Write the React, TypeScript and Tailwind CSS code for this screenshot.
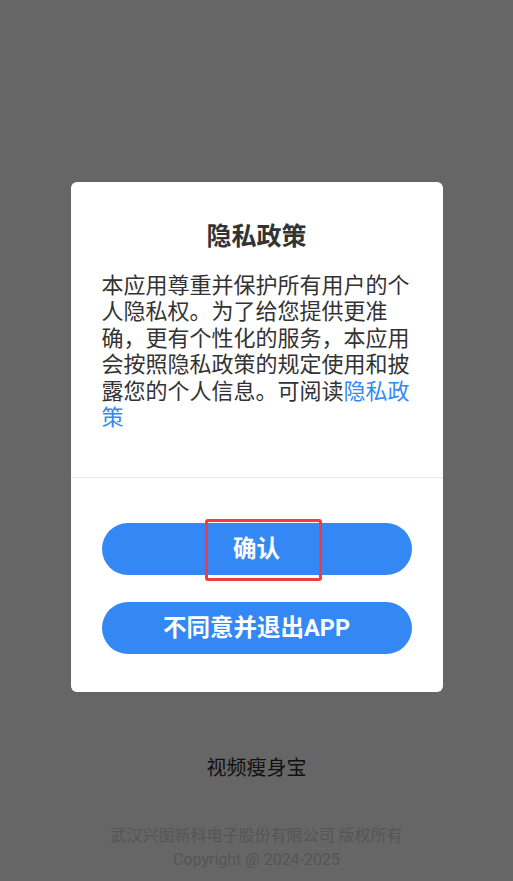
import React from "react";

export default function App() {
  const font = { fontFamily: 'Roboto, "Noto Sans CJK SC", sans-serif' };
  return (
    <div
      className="w-[513px] h-[881px] bg-[#666666] flex flex-col items-center overflow-hidden"
      style={font}
    >
      <div className="mt-[182px] w-[372px] h-[510px] bg-white rounded-[6px] flex flex-col">
        <div className="pt-[39px] text-center text-[25px] leading-[32px] font-bold text-[#333333]">
          隐私政策
        </div>
        <div className="mt-[20px] px-[31px] text-[22px] leading-[26.4px] text-[#333333]">
          本应用尊重并保护所有用户的个人隐私权。为了给您提供更准确，更有个性化的服务，本应用会按照隐私政策的规定使用和披露您的个人信息。可阅读
          <span className="text-[#3388f6]">隐私政策</span>
        </div>
        <div className="mt-[46px] h-px bg-[#e6e9f2]" />
        <div className="px-[31px] pt-[45px] flex flex-col gap-[27px]">
          <div className="relative">
            <button className="w-full h-[52px] rounded-full bg-[#3388f6] text-white text-[23.5px] font-bold">
              确认
            </button>
            <div className="absolute left-[103px] top-[-4px] w-[117px] h-[62px] border-[3px] border-[#f23b3b] rounded-[3px]" />
          </div>
          <button className="w-full h-[52px] rounded-full bg-[#3388f6] text-white text-[23.5px] font-bold">
            不同意并退出APP
          </button>
        </div>
      </div>
      <div className="mt-[63px] text-[20px] leading-[26px] text-[#111111]">视频瘦身宝</div>
      <div className="mt-[43px] text-[16px] leading-[24px] text-[#555555] text-center">
        <div>武汉兴图新科电子股份有限公司 版权所有</div>
        <div>Copyright @ 2024-2025</div>
      </div>
    </div>
  );
}
